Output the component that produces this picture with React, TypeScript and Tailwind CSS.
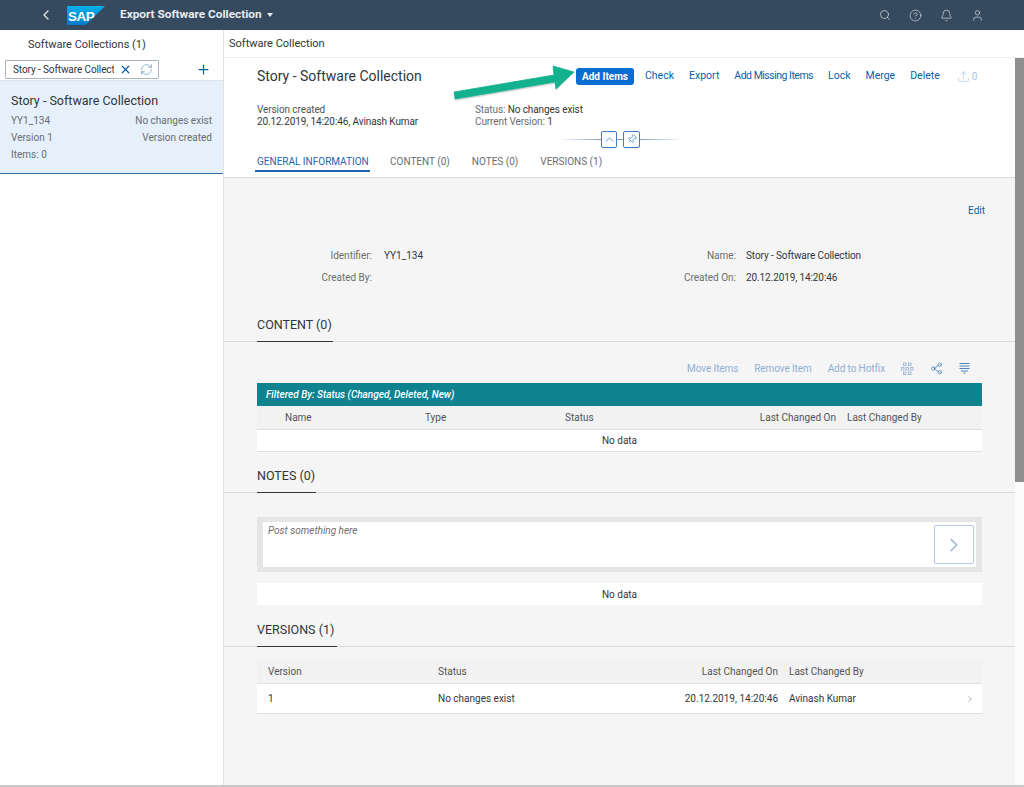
import React from "react";
import { ChevronLeft, ChevronRight, ChevronUp, Search, CircleHelp, Bell, User, X, RefreshCw, Plus, Pin, Share2, Upload } from "lucide-react";

const SapLogo = () => (
  <svg width="38" height="19" viewBox="0 0 38 19">
    <defs>
      <linearGradient id="sapBlue" x1="0" y1="0" x2="0" y2="1">
        <stop offset="0" stopColor="#00b1eb" />
        <stop offset="1" stopColor="#007ac7" />
      </linearGradient>
    </defs>
    <polygon points="0,0 38,0 19,19 0,19" fill="url(#sapBlue)" />
    <text x="1" y="14.5" fontSize="13.5" fontWeight="700" fill="#fff" fontFamily="Liberation Sans, sans-serif" letterSpacing="-0.5">
      SAP
    </text>
  </svg>
);

const ActionLink = ({ label, className = "" }: { label: string; className?: string }) => (
  <span className={`text-[10.5px] text-[#0a5fa8] ${className}`}>{label}</span>
);

const SectionTitle = ({ title, underline }: { title: string; underline: string }) => (
  <div className="h-[34px] border-b border-[#d9d9d9] pl-[33px] flex items-start">
    <div className={`${underline} h-[34px] border-b border-[#32363a] text-[12.5px] text-[#32363a] pt-[8px] leading-[18px]`}>
      {title}
    </div>
  </div>
);

const FieldRow = ({ label, value, label2, value2 }: { label: string; value: string; label2: string; value2: string }) => (
  <div className="flex h-[22px] items-center text-[10px]">
    <span className="w-[148px] text-right text-[#6a6d70]">{label}</span>
    <span className="w-[214px] pl-[12px] text-[#32363a]">{value}</span>
    <span className="w-[150px] text-right text-[#6a6d70]">{label2}</span>
    <span className="pl-[10px] text-[#32363a] tracking-[-0.1px]">{value2}</span>
  </div>
);

export default function App() {
  return (
    <div className="relative h-[787px] w-[1024px] overflow-hidden bg-white flex flex-col font-['Roboto',sans-serif] text-[#32363a]">
      {/* shell bar */}
      <header className="h-[30px] shrink-0 bg-[#354a5f] flex items-center text-white">
        <ChevronLeft size={16} strokeWidth={1.8} className="ml-[38px] text-[#e6eaef]" />
        <div className="ml-[13px]"><SapLogo /></div>
        <span className="ml-[15px] text-[11.8px] font-bold text-[#e8ecf0]">Export Software Collection</span>
        <span className="ml-[5px] w-0 h-0 border-x-[3.5px] border-x-transparent border-t-[4px] border-t-[#e8ecf0]" />
        <div className="ml-auto flex items-center gap-[18px] pr-[40px] text-[#d1d8df]">
          <Search size={12} strokeWidth={1.5} />
          <CircleHelp size={13} strokeWidth={1.3} />
          <Bell size={13} strokeWidth={1.3} />
          <User size={13} strokeWidth={1.3} />
        </div>
      </header>

      <div className="flex flex-1 min-h-0">
        {/* master list */}
        <aside className="w-[224px] shrink-0 border-r border-[#e2e2e2] flex flex-col">
          <div className="h-[28px] flex items-center pl-[28px] pt-[2px] text-[11px]">Software Collections (1)</div>
          <div className="h-[22px] flex items-center pl-[5px] pr-[12px]">
            <div className="w-[154px] h-[19px] border border-[#a9b4be] rounded-[1px] flex items-center pl-[7px] text-[10px] tracking-[-0.1px] overflow-hidden">
              <span className="w-[101px] overflow-hidden whitespace-nowrap">Story - Software Collection</span>
              <X size={13} strokeWidth={2.2} className="ml-[5px] text-[#0a5fa8]" />
              <RefreshCw size={13} strokeWidth={1.2} className="ml-[8px] text-[#5b8ec0]" />
            </div>
            <Plus size={15} strokeWidth={2} className="ml-auto text-[#0a5fa8]" />
          </div>
          <div className="h-[94px] bg-[#e5f0fa] border-t border-[#dfe3e6] border-b border-b-[#2f6da8] px-[11px] pt-[11px]">
            <div className="text-[12.5px] leading-[18px]">Story - Software Collection</div>
            <div className="flex justify-between text-[10px] text-[#6a6d70] leading-[17px] mt-[2px]">
              <span>YY1_134</span>
              <span>No changes exist</span>
            </div>
            <div className="flex justify-between text-[10px] text-[#6a6d70] leading-[17px]">
              <span>Version 1</span>
              <span>Version created</span>
            </div>
            <div className="text-[10px] text-[#6a6d70] leading-[17px]">Items: 0</div>
          </div>
        </aside>

        {/* detail */}
        <main className="flex-1 min-w-0 flex flex-col bg-[#f5f5f5]">
          <div className="h-[28px] shrink-0 bg-white border-b border-[#ececec] flex items-center pl-[5px] pt-[2px] text-[11px]">
            Software Collection
          </div>
          <div className="flex flex-1 min-h-0">
            <div className="w-[791px] shrink-0 flex flex-col">
              <section className="h-[120px] shrink-0 bg-white border-b border-[#d9d9d9] pl-[33px]">
                <div className="flex items-center h-[32px] pt-[4px]">
                  <span className="text-[14px] w-[319px]">Story - Software Collection</span>
                  <span className="w-[58px] h-[17px] rounded-[3px] bg-[#0a6ed1] text-white text-[10px] font-bold flex items-center justify-center">Add Items</span>
                  <div className="ml-[11px] flex items-center gap-[15px]">
                    <ActionLink label="Check" />
                    <ActionLink label="Export" />
                    <ActionLink label="Add Missing Items" className="tracking-[-0.5px]" />
                    <ActionLink label="Lock" />
                    <ActionLink label="Merge" />
                    <ActionLink label="Delete" />
                    <span className="ml-[2px] flex items-center gap-[2px] text-[10px] text-[#a9c4e4]">
                      <Upload size={13} strokeWidth={1.2} />0
                    </span>
                  </div>
                </div>
                <div className="flex mt-[14px] text-[10px] tracking-[-0.1px] leading-[12px]">
                  <div className="w-[218px]">
                    <div className="text-[#515456]">Version created</div>
                    <div>20.12.2019, 14:20:46, Avinash Kumar</div>
                  </div>
                  <div>
                    <div><span className="text-[#6a6d70]">Status:</span> No changes exist</div>
                    <div><span className="text-[#6a6d70]">Current Version:</span> 1</div>
                  </div>
                </div>
                <div className="flex items-center h-[18px] mt-[2px] pl-[303px]">
                  <div className="w-[41px] h-px bg-gradient-to-r from-white to-[#7f9fc4]" />
                  <div className="w-[16px] h-[17px] border border-[#3f7cc0] rounded-[2px] flex items-center justify-center">
                    <ChevronUp size={13} strokeWidth={1.2} className="text-[#0a5fa8]" />
                  </div>
                  <div className="w-[6px] h-px bg-[#7f9fc4]" />
                  <div className="w-[17px] h-[17px] border border-[#3f7cc0] rounded-[2px] flex items-center justify-center">
                    <Pin size={10} strokeWidth={1.3} className="text-[#0a5fa8] rotate-45" />
                  </div>
                  <div className="w-[44px] h-px bg-gradient-to-r from-[#7f9fc4] to-white" />
                </div>
                <div className="flex mt-[2px] -ml-[2px] text-[10px] text-[#6a6d70] h-[22px]">
                  <div className="h-[22px] w-[115px] border-b-2 border-[#1a66b0] text-[#2367ad] pl-[2px] pt-[4px]">GENERAL INFORMATION</div>
                  <div className="ml-[20px] pt-[4px]">CONTENT (0)</div>
                  <div className="ml-[22px] pt-[4px]">NOTES (0)</div>
                  <div className="ml-[22px] pt-[4px]">VERSIONS (1)</div>
                </div>
              </section>

              <div className="h-[31px] shrink-0 flex items-end justify-end pr-[30px] mt-[9px]">
                <span className="text-[10px] text-[#0a5fa8]">Edit</span>
              </div>
              <div className="mt-[26px] shrink-0">
                <FieldRow label="Identifier:" value="YY1_134" label2="Name:" value2="Story - Software Collection" />
                <FieldRow label="Created By:" value="" label2="Created On:" value2="20.12.2019, 14:20:46" />
              </div>

              <div className="mt-[20px] shrink-0">
                <SectionTitle title="CONTENT (0)" underline="w-[76px]" />
              </div>
              <div className="h-[41px] shrink-0 flex items-center justify-end pr-[45px] gap-[16px] text-[10px] tracking-[-0.1px] text-[#8fb0d6] pt-[11px]">
                <span>Move Items</span>
                <span>Remove Item</span>
                <span>Add to Hotfix</span>
                <svg width="13" height="13" viewBox="0 0 13 13" fill="none" stroke="#a4bedd" strokeWidth="1">
                  <rect x="2.5" y="1" width="2.5" height="2.5" />
                  <rect x="7.5" y="1" width="2.5" height="2.5" />
                  <rect x="0.5" y="5.5" width="2.5" height="2.5" />
                  <rect x="5" y="5.5" width="2.5" height="2.5" />
                  <rect x="9.5" y="5.5" width="2.5" height="2.5" />
                  <rect x="2.5" y="10" width="2.5" height="2.5" />
                  <rect x="7.5" y="10" width="2.5" height="2.5" />
                </svg>
                <Share2 size={13} strokeWidth={1.2} className="text-[#1f6bb5]" />
                <svg width="11" height="12" viewBox="0 0 11 12" fill="none" stroke="#4f86c0" strokeWidth="1">
                  <path d="M0.5 1.5h10M0.5 4h10M0.5 6.5h10M2 9h7M4.5 11h2" />
                </svg>
              </div>
              <div className="ml-[33px] w-[725px] shrink-0">
                <div className="h-[23px] bg-[#0f828f] text-white italic font-medium text-[10px] flex items-center pl-[9px]">
                  Filtered By: Status (Changed, Deleted, New)
                </div>
                <div className="h-[24px] bg-[#f2f2f2] border-b border-[#e0e0e0] text-[10px] text-[#515456] flex items-center">
                  <span className="w-[168px] pl-[28px]">Name</span>
                  <span className="w-[140px]">Type</span>
                  <span className="w-[120px]">Status</span>
                  <span className="w-[151px] text-right">Last Changed On</span>
                  <span className="pl-[11px]">Last Changed By</span>
                </div>
                <div className="h-[22px] bg-white border-b border-[#e0e0e0] text-[10px] flex items-center justify-center">No data</div>
              </div>

              <div className="mt-[7px] shrink-0">
                <SectionTitle title="NOTES (0)" underline="w-[59px]" />
              </div>
              <div className="ml-[33px] w-[725px] shrink-0 mt-[24px]">
                <div className="h-[55px] bg-[#e5e5e5] px-[6px] py-[5px]">
                  <div className="h-[45px] bg-white flex justify-between pl-[5px] pr-[2px] pt-[3px]">
                    <span className="text-[10px] italic text-[#6a6d70] leading-[12px]">Post something here</span>
                    <div className="w-[40px] h-[39px] border border-[#b4c8e2] rounded-[2px] flex items-center justify-center">
                      <ChevronRight size={22} strokeWidth={1.8} className="text-[#9fb8da]" />
                    </div>
                  </div>
                </div>
                <div className="h-[22px] mt-[11px] bg-white text-[10px] flex items-center justify-center">No data</div>
              </div>

              <div className="mt-[8px] shrink-0">
                <SectionTitle title="VERSIONS (1)" underline="w-[80px]" />
              </div>
              <div className="ml-[33px] w-[725px] shrink-0 mt-[13px]">
                <div className="h-[24px] bg-[#f2f2f2] border-b border-[#e0e0e0] text-[10px] text-[#515456] flex items-center">
                  <span className="w-[181px] pl-[11px]">Version</span>
                  <span className="w-[140px]">Status</span>
                  <span className="w-[200px] text-right">Last Changed On</span>
                  <span className="pl-[11px]">Last Changed By</span>
                </div>
                <div className="h-[30px] bg-white border-b border-[#e0e0e0] text-[10px] flex items-center">
                  <span className="w-[181px] pl-[11px]">1</span>
                  <span className="w-[140px]">No changes exist</span>
                  <span className="w-[200px] text-right">20.12.2019, 14:20:46</span>
                  <span className="pl-[11px]">Avinash Kumar</span>
                  <ChevronRight size={10} className="ml-auto mr-[7px] text-[#a0a4a8]" />
                </div>
              </div>
            </div>
            {/* scrollbar */}
            <div className="flex-1 bg-[#fbfbfb]">
              <div className="h-[424px] bg-[#8e8e8e]" />
            </div>
          </div>
        </main>
      </div>
      <div className="h-[2px] shrink-0 bg-[#c8c8c8]" />

      {/* annotation arrow on top of the screenshot */}
      <svg className="absolute left-[450px] top-[60px]" width="130" height="44" viewBox="0 0 130 44">
        <path d="M4 34 L104 17 L103 8 L124 12 L106 31 L105 24 L5 41 Z" fill="#000" opacity="0.15" />
        <path d="M4 32 L104 15 L103 6 L124 12 L106 29 L105 22 L5 39 Z" fill="#14b18e" stroke="#14b18e" strokeWidth="0.8" strokeLinejoin="round" />
      </svg>
    </div>
  );
}
